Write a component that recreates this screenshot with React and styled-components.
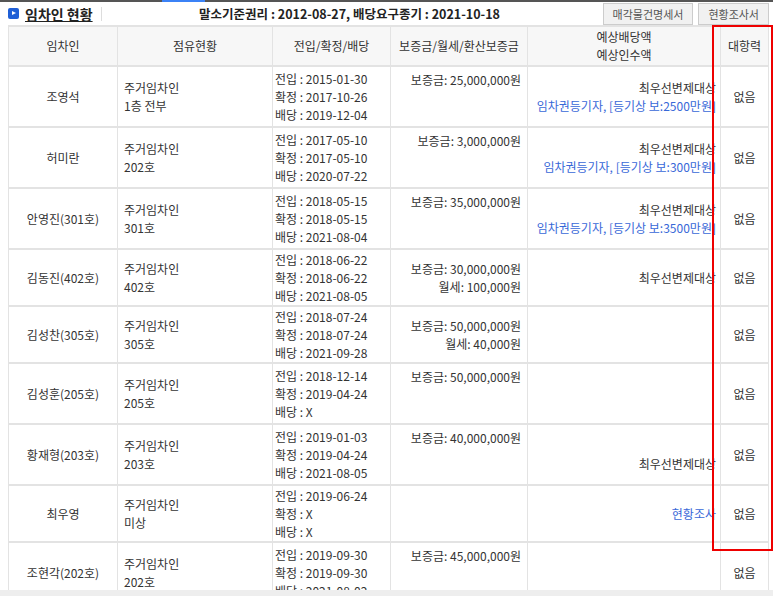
import React from "react";
import styled, { createGlobalStyle } from "styled-components";

const G = createGlobalStyle`
  html,body{margin:0;padding:0;background:#fff;overflow:hidden;}
  body{font-family:"Noto Sans CJK KR","Noto Sans",sans-serif;font-size:12px;color:#333;}
`;
const Page = styled.div`width:773px;height:596px;position:relative;overflow:hidden;`;
const TopBar = styled.div`height:2px;background:#555;position:relative;
  &::after{content:"";position:absolute;left:162px;width:43px;top:0;height:2px;background:#3b82f6;}`;
const Head = styled.div`display:flex;align-items:center;height:23px;padding:0 4px 0 8px;`;
const Title = styled.div`display:flex;align-items:center;gap:6px;font-size:14px;font-weight:bold;color:#222;
  span{text-decoration:underline;}`;
const Icon = styled.div`width:11px;height:11px;background:#1f5fd6;border-radius:2px;position:relative;
  &::after{content:"";position:absolute;left:4px;top:3px;border-left:4px solid #fff;border-top:2.5px solid transparent;border-bottom:2.5px solid transparent;}`;
const Sep = styled.div`width:1px;height:14px;background:#ddd;margin-left:8px;`;
const Info = styled.div`flex:1;text-align:center;font-weight:bold;font-size:12.5px;color:#222;`;
const Btn = styled.div`border:1px solid #ccc;background:#f1f1f1;color:#555;font-size:11px;padding:2px 9px;margin-left:5px;`;
const Table = styled.table`border-collapse:collapse;margin-left:8px;width:760px;table-layout:fixed;
  th,td{border:1px solid #e3e3e3;border-width:2px 1px;font-weight:normal;line-height:18px;padding:0 6px;}
  th{background:#f7f7f7;height:38px;color:#333;}
  td{height:55px;}
  td > div{line-height:18px;}`;
const Col = styled.col`width:${p=>p.w}px;`;
const C = styled.td`text-align:${p=>p.a||"center"};white-space:nowrap;overflow:hidden;
  vertical-align:${p=>p.top?"top":"middle"};
  padding-top:${p=>p.top?"4px":"0"} !important;
  padding-left:${p=>p.pl??6}px !important;
  padding-right:${p=>p.pr??6}px !important;`;
const Line = styled.div`color:${p=>p.blue?"#3868d8":"#333"};`;
const Red = styled.div`position:absolute;left:712px;top:25px;width:57px;height:522px;border:2px solid #e00;`;
const Bottom = styled.div`position:absolute;left:0;right:0;top:590px;height:6px;background:#eee;z-index:2;`;

const rows = [
  ["조영석","1층 전부",["2015-01-30","2017-10-26","2019-12-04"],["보증금: 25,000,000원"],["최우선변제대상","#임차권등기자, [등기상 보:2500만원]"]],
  ["허미란","202호",["2017-05-10","2017-05-10","2020-07-22"],["보증금: 3,000,000원"],["최우선변제대상","#임차권등기자, [등기상 보:300만원]"]],
  ["안영진(301호)","301호",["2018-05-15","2018-05-15","2021-08-04"],["보증금: 35,000,000원"],["최우선변제대상","#임차권등기자, [등기상 보:3500만원]"]],
  ["김동진(402호)","402호",["2018-06-22","2018-06-22","2021-08-05"],["보증금: 30,000,000원","월세: 100,000원"],["최우선변제대상"]],
  ["김성찬(305호)","305호",["2018-07-24","2018-07-24","2021-09-28"],["보증금: 50,000,000원","월세: 40,000원"],[]],
  ["김성훈(205호)","205호",["2018-12-14","2019-04-24","X"],["보증금: 50,000,000원"],[]],
  ["황재형(203호)","203호",["2019-01-03","2019-04-24","2021-08-05"],["보증금: 40,000,000원"],["\u00a0","최우선변제대상"]],
  ["최우영","미상",["2019-06-24","X","X"],[],["#현황조사"]],
  ["조현각(202호)","202호",["2019-09-30","2019-09-30","2021-08-02"],["보증금: 45,000,000원"],[]],
];

export default function App(){
  return <Page><G/>
    <TopBar/>
    <Head>
      <Title><Icon/><span>임차인 현황</span></Title><Sep/>
      <Info>말소기준권리 : 2012-08-27, 배당요구종기 : 2021-10-18</Info>
      <Btn>매각물건명세서</Btn><Btn>현황조사서</Btn>
    </Head>
    <Table>
      <colgroup><Col w={109}/><Col w={155}/><Col w={118}/><Col w={137}/><Col w={193}/><Col w={48}/></colgroup>
      <thead><tr><th>임차인</th><th>점유현황</th><th>전입/확정/배당</th><th>보증금/월세/환산보증금</th><th>예상배당액<br/>예상인수액</th><th>대항력</th></tr></thead>
      <tbody>{rows.map((r,i)=><tr key={i}>
        <C>{r[0]}</C>
        <C a="left">주거임차인<br/>{r[1]}</C>
        <C a="left" pl={2}>전입 : {r[2][0]}<br/>확정 : {r[2][1]}<br/>배당 : {r[2][2]}</C>
        <C a="right" top={r[3].length===1}>{r[3].map((t,j)=><Line key={j}>{t}</Line>)}</C>
        <C a="right" pr={4}>{r[4].map((t,j)=><Line key={j} blue={t.startsWith("#")}>{t.replace("#","")}</Line>)}</C>
        <C>없음</C>
      </tr>)}</tbody>
    </Table>
    <Red/>
    <Bottom/>
  </Page>;
}
